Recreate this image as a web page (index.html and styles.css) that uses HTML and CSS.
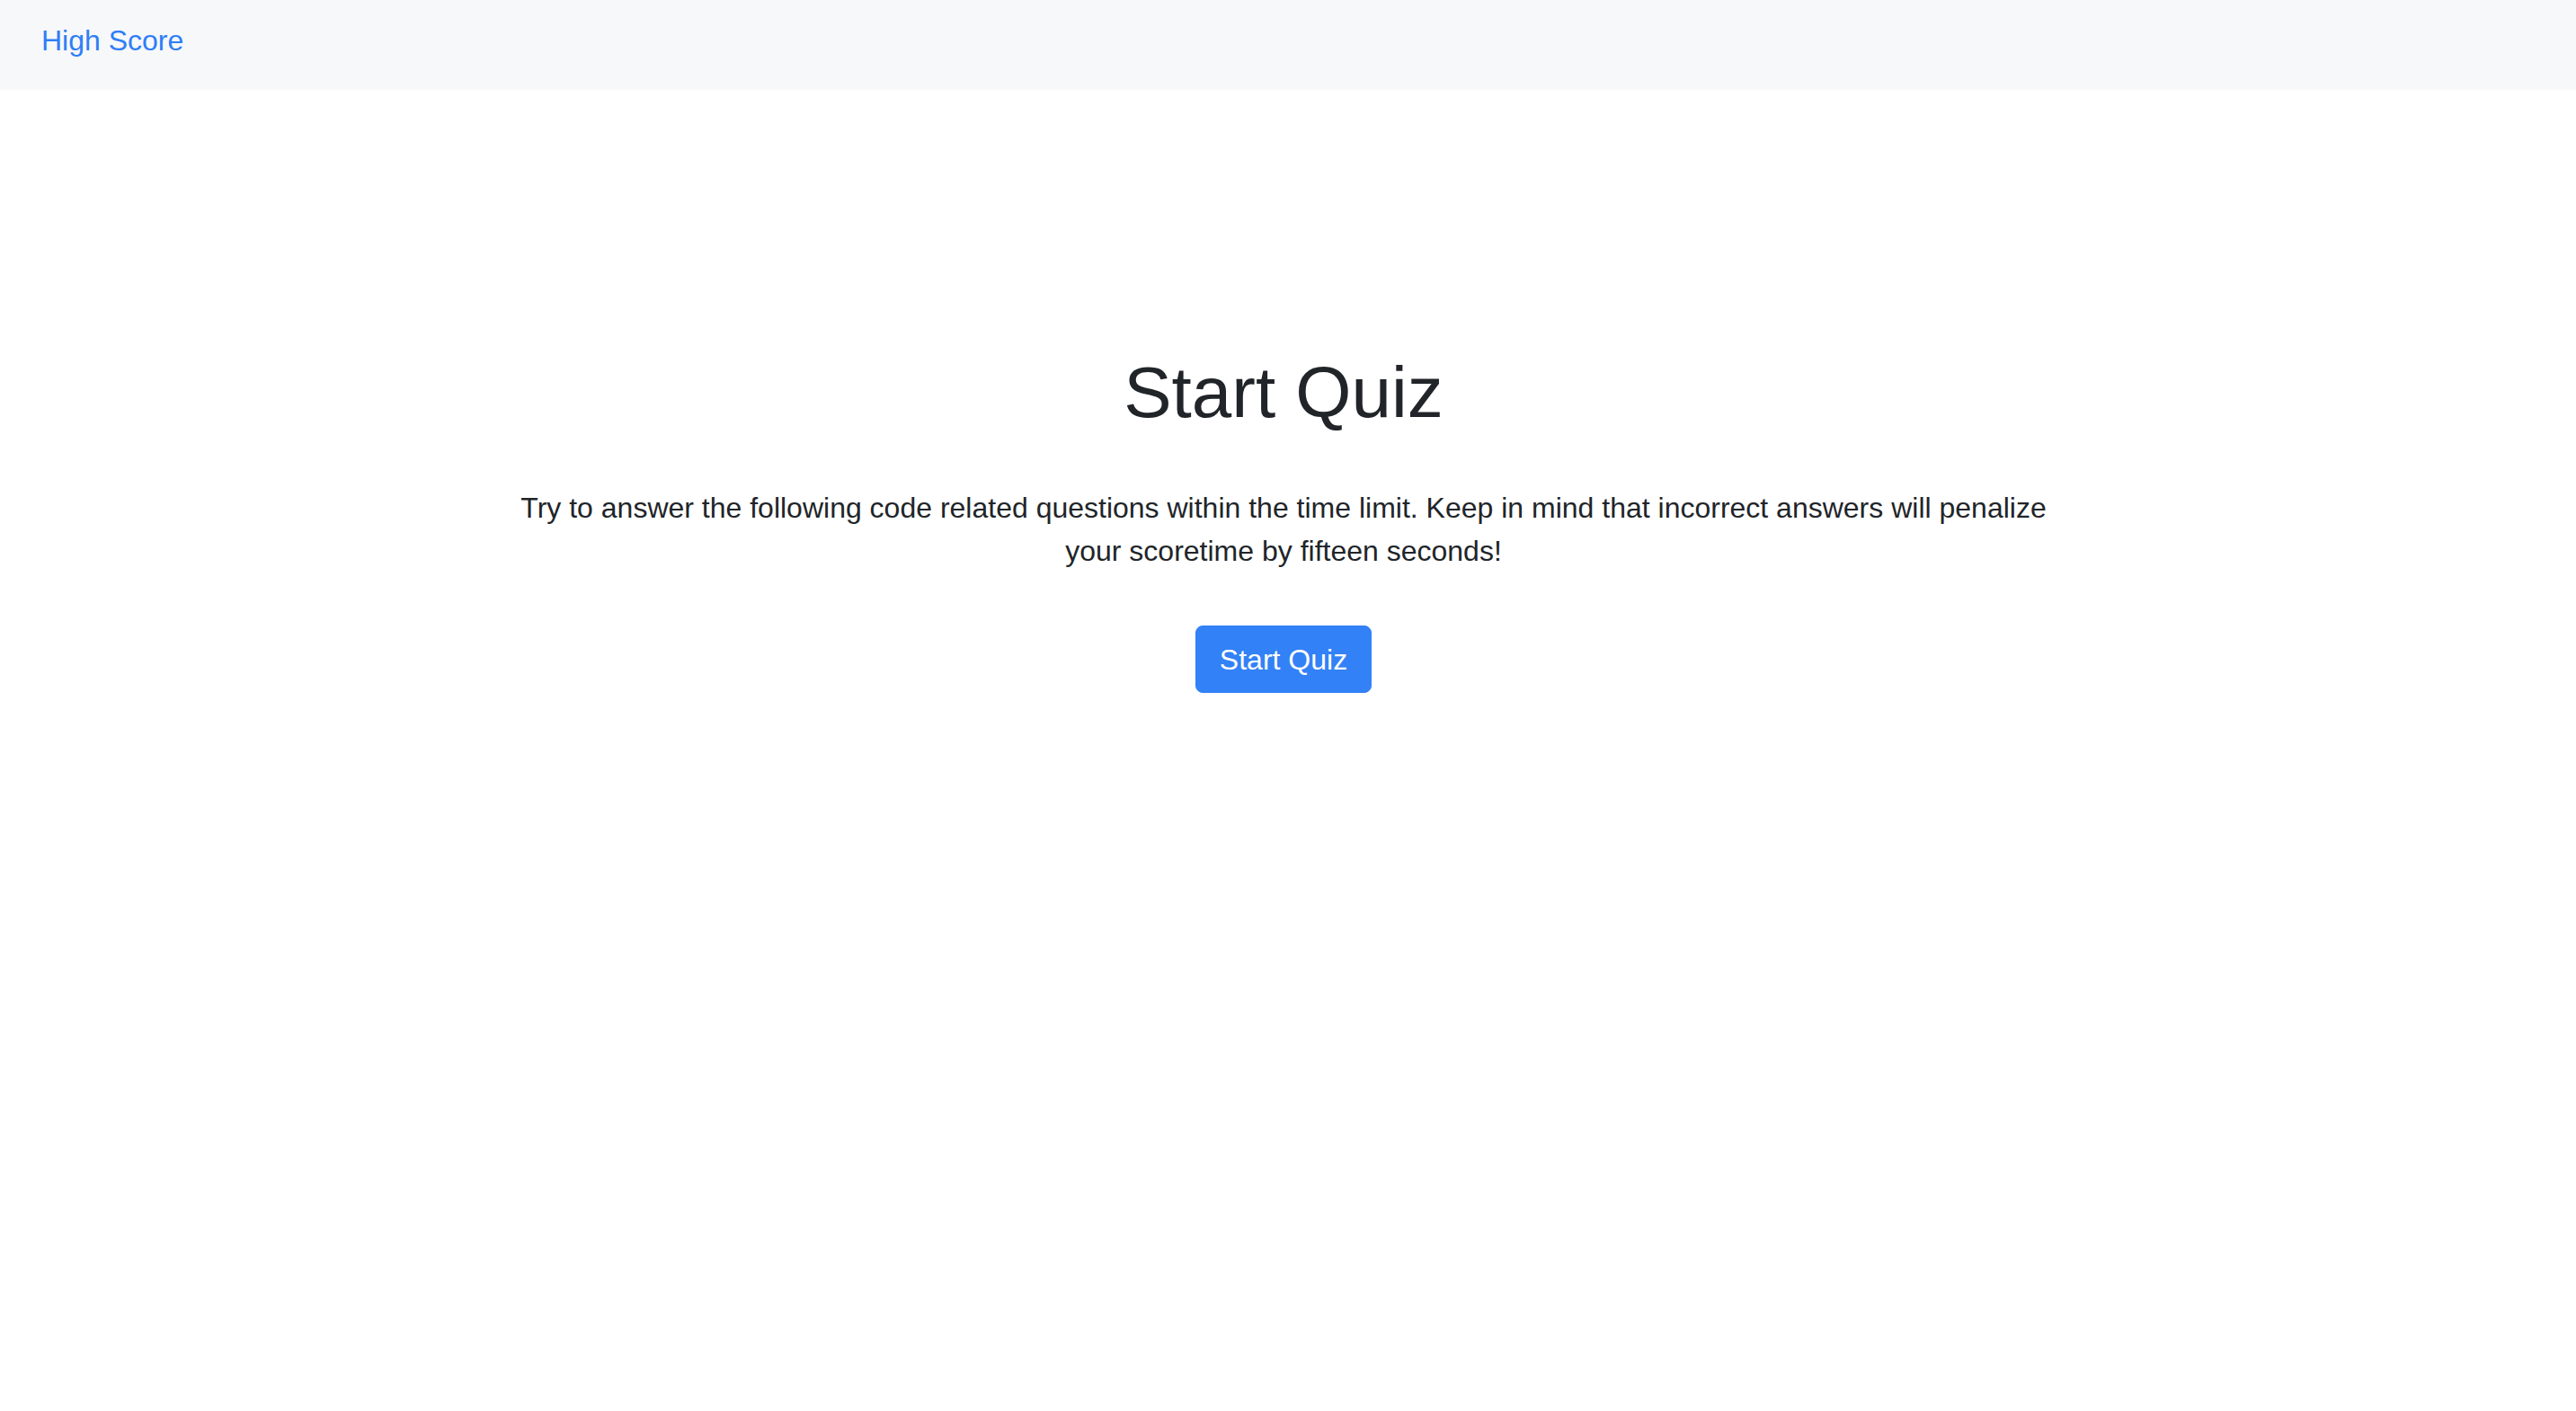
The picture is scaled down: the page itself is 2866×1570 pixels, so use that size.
FILE: index.html
```html
<!DOCTYPE html>
<html lang="en">
<head>
<meta charset="utf-8">
<title>Code Quiz</title>
<link rel="stylesheet" href="styles.css">
</head>
<body>
<nav class="navbar">
  <a class="brand" href="#">High Score</a>
</nav>
<main class="main">
  <section class="intro">
    <h1 class="title">Start Quiz</h1>
    <p class="lead">Try to answer the following code related questions within the time limit. Keep in mind that incorrect answers will penalize your scoretime by fifteen seconds!</p>
    <button class="btn" type="button">Start Quiz</button>
  </section>
</main>
</body>
</html>
```

FILE: styles.css
```css
* { box-sizing: border-box; }
html, body { margin: 0; padding: 0; }
body {
  font-family: "Liberation Sans", Arial, Helvetica, sans-serif;
  color: #212529;
  background: #ffffff;
}
.navbar {
  height: 100px;
  background: #f7f8fa;
  display: flex;
  align-items: center;
  padding: 0 46px;
}
.brand {
  font-size: 32px;
  line-height: 48px;
  color: #2f7ef6;
  text-decoration: none;
  margin-top: -11px;
}
.main {
  padding-right: 10px;
}
.intro {
  display: flex;
  flex-direction: column;
  align-items: center;
  padding-top: 289px;
  text-align: center;
}
.title {
  margin: 0;
  font-size: 80px;
  line-height: 96px;
  font-weight: 400;
  color: #212529;
}
.lead {
  margin: 56px 0 0;
  width: 1740px;
  font-size: 32px;
  line-height: 48px;
  color: #212529;
}
.btn {
  margin-top: 59px;
  font-family: "Liberation Sans", Arial, Helvetica, sans-serif;
  font-size: 32px;
  line-height: 48px;
  padding: 12.5px 26px;
  border: 1px solid #3381f6;
  background: #3381f6;
  color: #ffffff;
  border-radius: 8px;
  cursor: pointer;
}
```
